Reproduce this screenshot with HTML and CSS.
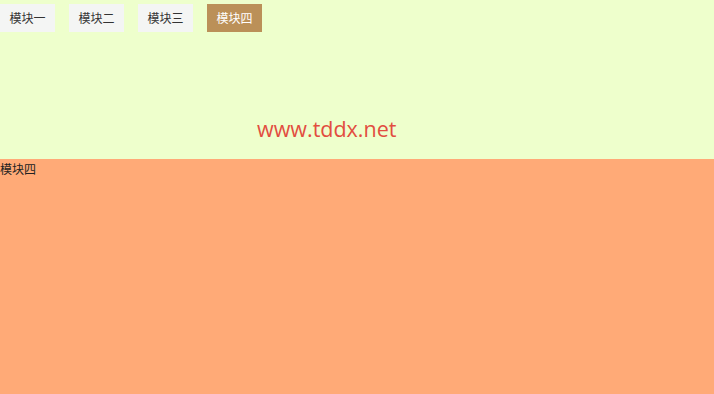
FILE: index.html
```html
<!DOCTYPE html>
<html>
<head>
<meta charset="utf-8">
<link rel="stylesheet" href="styles.css">
</head>
<body>
<div class="top">
  <div class="tabs">
    <div class="tab">模块一</div>
    <div class="tab">模块二</div>
    <div class="tab">模块三</div>
    <div class="tab active">模块四</div>
  </div>
  <div class="site">www.tddx.net</div>
</div>
<div class="panel">模块四</div>
</body>
</html>
```
FILE: styles.css
```css
html, body {
  margin: 0;
  padding: 0;
}
body {
  font-family: "Noto Sans CJK SC", "Noto Sans", sans-serif;
  font-size: 12px;
  color: #333;
  background: #ffaa77;
  height: 394px;
  overflow: hidden;
}
.top {
  background: #eeffcc;
  height: 159px;
  display: flex;
  flex-direction: column;
}
.tabs {
  display: flex;
  gap: 14px;
  padding-top: 4px;
}
.tab {
  width: 55px;
  height: 28px;
  line-height: 28px;
  text-align: center;
  background: #f4f5f4;
  color: #333;
  font-size: 12px;
}
.tab.active {
  background: #bb9058;
  color: #fff;
}
.site {
  margin-top: 84px;
  margin-left: 257px;
  font-family: "Open Sans", "Noto Sans", sans-serif;
  font-size: 21.5px;
  line-height: 26px;
  color: #e24d40;
}
.panel {
  background: #ffaa77;
  color: #222;
  font-size: 12px;
  line-height: 18px;
  padding-top: 1px;
}
```
